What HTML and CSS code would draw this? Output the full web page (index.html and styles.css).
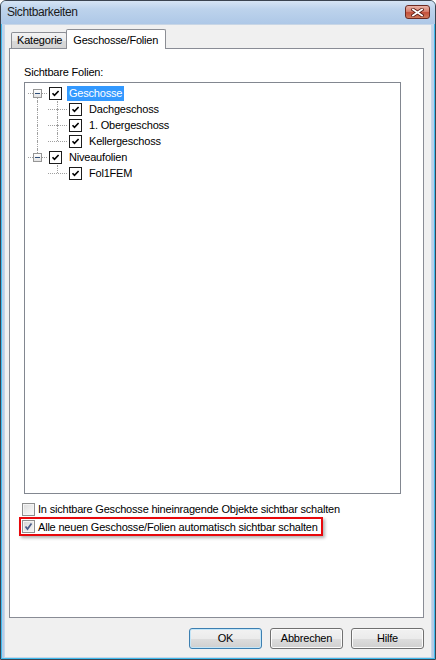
FILE: index.html
```html
<html>

<head>
  <link rel="stylesheet" href="styles.css">
</head>

<body>
  <div class="dialog">

    <div class="dialog-title">
      <span class="dialog-title-text">Sichtbarkeiten</span>
      <div class="dialog-close">
        <svg width="13" height="9" viewBox="0 0 13 9">
          <path d="M2 1.5 L11 7.5 M11 1.5 L2 7.5" stroke="#5a1c14" stroke-width="3.4" stroke-linecap="square"/>
          <path d="M2 1.5 L11 7.5 M11 1.5 L2 7.5" stroke="#fff" stroke-width="1.8" stroke-linecap="square"/>
        </svg>
      </div>
    </div>

    <div class="dialog-client">
      <div class="tabs">
        <div class="tab">Kategorie</div>
        <div class="tab tab-active">Geschosse/Folien</div>
      </div>

      <div class="tab-page">
        <div class="tree-label">Sichtbare Folien:</div>

        <div class="tree">
          <div class="tree-row">
            <span class="tree-cell has-right has-down"><span class="tree-expander"></span></span>
            <span class="tree-check"></span>
            <span class="tree-text tree-text-selected">Geschosse</span>
          </div>
          <div class="tree-row">
            <span class="tree-cell has-up has-down"></span>
            <span class="tree-cell has-up has-down has-right"></span>
            <span class="tree-check"></span>
            <span class="tree-text">Dachgeschoss</span>
          </div>
          <div class="tree-row">
            <span class="tree-cell has-up has-down"></span>
            <span class="tree-cell has-up has-down has-right"></span>
            <span class="tree-check"></span>
            <span class="tree-text">1. Obergeschoss</span>
          </div>
          <div class="tree-row">
            <span class="tree-cell has-up has-down"></span>
            <span class="tree-cell has-up has-right"></span>
            <span class="tree-check"></span>
            <span class="tree-text">Kellergeschoss</span>
          </div>
          <div class="tree-row">
            <span class="tree-cell has-up has-right"><span class="tree-expander"></span></span>
            <span class="tree-check"></span>
            <span class="tree-text">Niveaufolien</span>
          </div>
          <div class="tree-row">
            <span class="tree-cell"></span>
            <span class="tree-cell has-up has-right"></span>
            <span class="tree-check"></span>
            <span class="tree-text">Fol1FEM</span>
          </div>
        </div>

        <div class="option">
          <span class="option-box"></span>
          <span class="option-text">In sichtbare Geschosse hineinragende Objekte sichtbar schalten</span>
        </div>
        <div class="option option-marked">
          <span class="option-box option-box-checked"></span>
          <span class="option-text">Alle neuen Geschosse/Folien automatisch sichtbar schalten</span>
        </div>
      </div>

      <div class="buttons">
        <div class="button button-default">OK</div>
        <div class="button">Abbrechen</div>
        <div class="button">Hilfe</div>
      </div>
    </div>

  </div>
</body>

</html>
```

FILE: styles.css
```css
* {
  margin: 0;
  padding: 0;
  box-sizing: border-box;
}

body {
  font-family: "Liberation Sans", Arial, sans-serif;
  font-size: 11px;
  letter-spacing: -0.2px;
  color: #000;
  background: #fff;
}

.dialog {
  width: 436px;
  height: 660px;
  display: flex;
  flex-direction: column;
  border: 1px solid #3b4450;
  border-radius: 6px 6px 0 0;
  background: linear-gradient(#d9e6f5, #bcd2ec 30px, #b3cbe8);
  box-shadow: inset 0 0 0 1px #3fbbee;
  overflow: hidden;
}

.dialog-title {
  height: 23px;
  flex-shrink: 0;
  display: flex;
  align-items: center;
  justify-content: space-between;
  padding: 0 5px 2px 6px;
  background: linear-gradient(#d6e4f4, #bdd3ec 8px, #aec8e7);
}

.dialog-title-text {
  font-size: 12px;
  letter-spacing: -0.4px;
  color: #1a1a1a;
}

.dialog-close {
  width: 25px;
  height: 14px;
  margin-top: 1px;
  display: flex;
  align-items: center;
  justify-content: center;
  border: 1px solid #6b2a22;
  border-radius: 3px;
  background: linear-gradient(#e9b3a8, #d7806f 45%, #c4503b 55%, #cf7a5c);
}

.dialog-client {
  flex-grow: 1;
  display: flex;
  flex-direction: column;
  margin: 0 3px 2px 3px;
  background: #f0f0f0;
  border: 1px solid #c8d6e6;
  padding: 4px 7px 8px 4px;
}

.tabs {
  display: flex;
  align-items: flex-end;
  height: 19px;
  padding-left: 2px;
  position: relative;
  z-index: 1;
}

.tab {
  height: 16px;
  padding: 0 4px 0 5px;
  line-height: 15px;
  border: 1px solid #8c8e94;
  border-bottom: none;
  border-radius: 2px 2px 0 0;
  background: linear-gradient(#f3f3f3, #e9e9e9 50%, #d9d9d9 51%, #d4d4d4);
}

.tab-active {
  height: 20px;
  margin-bottom: -1px;
  margin-left: -1px;
  padding: 3px 7px 0 6px;
  background: #fff;
}

.tab-page {
  height: 570px;
  flex-shrink: 0;
  border: 1px solid #898c95;
  background: #fff;
  padding: 17px 22px 0 14px;
}

.tree-label {
  height: 13px;
  line-height: 13px;
  margin-bottom: 3px;
}

.tree {
  height: 412px;
  border: 1px solid #828790;
  background: #fff;
  padding: 2px 0 0 3px;
  margin-bottom: 7px;
}

.tree-row {
  height: 16px;
  display: flex;
  align-items: center;
}

.tree-cell {
  width: 20px;
  height: 16px;
  flex-shrink: 0;
  position: relative;
}

.tree-cell.has-up::before,
.tree-cell.has-down::after {
  content: "";
  position: absolute;
  left: 9px;
  border-left: 1px dotted #a0a0a0;
}

.tree-cell.has-up::before {
  top: 0;
  height: 8px;
}

.tree-cell.has-down::after {
  top: 8px;
  height: 8px;
}

.tree-cell.has-right {
  background: linear-gradient(to right, #a0a0a0 50%, transparent 50%) 10px 8px / 2px 1px repeat-x;
}

.tree-expander {
  position: absolute;
  left: 5px;
  top: 4px;
  width: 9px;
  height: 9px;
  border: 1px solid #969696;
  background: linear-gradient(#fff, #e4e4e4);
  z-index: 1;
}

.tree-expander::after {
  content: "";
  position: absolute;
  left: 1px;
  top: 3px;
  width: 5px;
  height: 1px;
  background: #2f4f7a;
}

.tree-check {
  width: 13px;
  height: 13px;
  flex-shrink: 0;
  margin-left: 1px;
  border: 1px solid #1c1c1c;
  background: #fff url("data:image/svg+xml,%3Csvg xmlns='http://www.w3.org/2000/svg' width='11' height='11'%3E%3Cpath d='M2.5 5.2 L4.5 7.4 L8.6 3' fill='none' stroke='%23000' stroke-width='1.6'/%3E%3C/svg%3E") no-repeat center;
}

.tree-text {
  margin-left: 5px;
  padding: 0 2px;
  height: 15px;
  line-height: 15px;
  white-space: nowrap;
}

.tree-text-selected {
  background: #3399ff;
  color: #fff;
}

.option {
  display: flex;
  align-items: center;
  height: 16px;
  margin-left: -2px;
}

.option-marked {
  width: 304px;
  height: 19px;
  margin-left: -5px;
  padding-left: 1px;
  border: 2px solid #e8080c;
  box-shadow: 2px 2px 3px rgba(0, 0, 0, 0.3);
}

.option-box {
  width: 13px;
  height: 13px;
  flex-shrink: 0;
  border: 1px solid #8e8f8f;
  background: linear-gradient(135deg, #dcdcdc, #fbfbfb);
  box-shadow: inset 0 0 0 1px #f4f4f4;
}

.option-box-checked {
  background: url("data:image/svg+xml,%3Csvg xmlns='http://www.w3.org/2000/svg' width='11' height='11'%3E%3Cpath d='M2.5 5.5 L4.5 8 L8.5 2.5' fill='none' stroke='%234a5d8a' stroke-width='1.7'/%3E%3C/svg%3E") no-repeat center, linear-gradient(135deg, #d6d6d6, #f6f6f6);
}

.option-text {
  margin-left: 3px;
  white-space: nowrap;
}

.buttons {
  display: flex;
  justify-content: flex-end;
  gap: 8px;
  margin-top: 10px;
}

.button {
  width: 73px;
  height: 21px;
  line-height: 19px;
  text-align: center;
  border: 1px solid #707070;
  border-radius: 3px;
  background: linear-gradient(#f2f2f2, #ebebeb 50%, #dddddd 51%, #cfcfcf);
  box-shadow: inset 0 0 0 1px #fbfbfb;
}

.button-default {
  border-color: #3c7fb1;
  box-shadow: inset 0 0 0 1px #c4e6f8;
}
```
